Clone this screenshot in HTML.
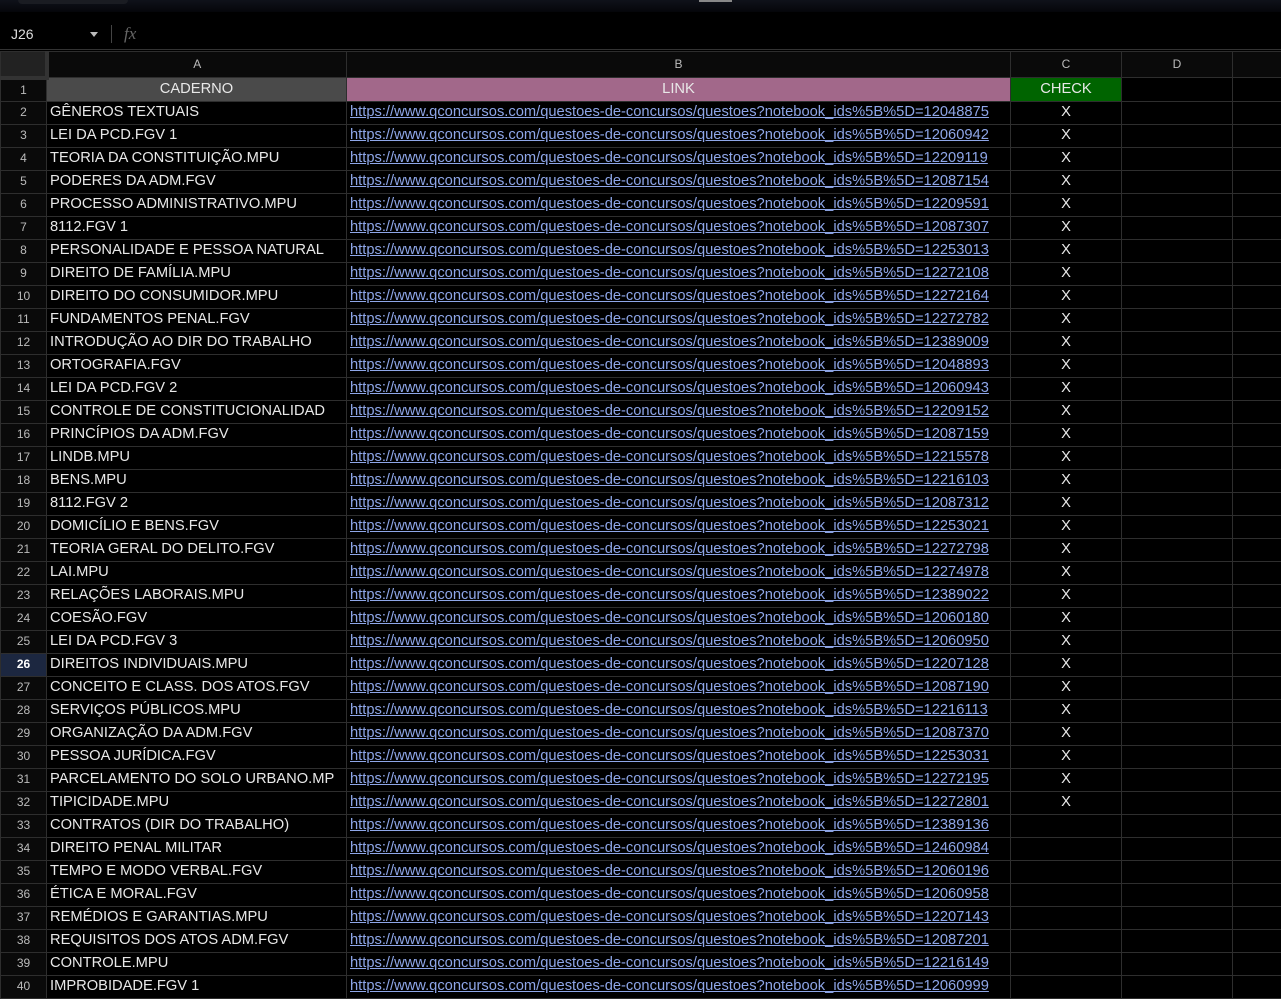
<!DOCTYPE html>
<html><head><meta charset="utf-8"><style>
*{margin:0;padding:0;box-sizing:border-box}
body{width:1281px;height:983px;overflow:hidden;background:#000;font-family:"Liberation Sans",Arial,sans-serif;color:#e8e8e8;position:relative}
.top{position:absolute;left:0;top:0;width:1281px;height:12px;background:linear-gradient(#0f121a,#05060a)}
.tab{position:absolute;left:18px;top:0;width:110px;height:4px;background:#1a1c22;border-radius:0 0 8px 8px}
.tab2{position:absolute;left:699px;top:0;width:33px;height:2px;background:#888}
.fb{position:absolute;left:0;top:18px;width:1281px;height:32px;background:#000;border-bottom:1px solid #333}
.nb{position:absolute;left:11px;top:8px;font-size:14px;color:#ddd}
.arr{position:absolute;left:90px;top:14px;border-left:4px solid transparent;border-right:4px solid transparent;border-top:5px solid #bbb}
.sep{position:absolute;left:111px;top:7px;width:1px;height:18px;background:#444}
.fx{position:absolute;left:124px;top:6px;font-family:"Liberation Serif",serif;font-style:italic;font-size:17px;color:#666}
table{position:absolute;left:0;top:51px;width:1290px;border-collapse:collapse;table-layout:fixed}
td{height:23px;border:1px solid #2e2e2e;font-size:14.7px;white-space:nowrap;overflow:hidden;padding:0 3px;line-height:21px}
tr.h td{height:26px;background:#0a0a0a;color:#bbb;font-size:12px;text-align:center}
td.r{background:#0a0a0a;color:#bbb;font-size:12px;text-align:center;padding:0}
tr.h td.corner{background:#222;border-right:4px solid #333;border-bottom:4px solid #333}
td.l{color:#8ea6e8;text-decoration:underline}
td.c{text-align:center}
td.sel{background:#1c2740;color:#fff;font-weight:bold}
</style></head><body>
<div class="top"><div class="tab"></div><div class="tab2"></div></div>
<div class="fb"><span class="nb">J26</span><span class="arr"></span><span class="sep"></span><span class="fx">fx</span></div>
<table>
<colgroup><col style="width:46px"><col style="width:300px"><col style="width:664px"><col style="width:111px"><col style="width:111px"><col style="width:58px"></colgroup>
<tr class="h"><td class="corner"></td><td>A</td><td>B</td><td>C</td><td>D</td><td></td></tr>
<tr><td class="r">1</td><td style="background:#4a4a4a;text-align:center">CADERNO</td><td style="background:#a2688a;text-align:center">LINK</td><td style="background:#006400;text-align:center">CHECK</td><td></td><td></td></tr>
<tr><td class="r">2</td><td>GÊNEROS TEXTUAIS</td><td class="l">https://www.qconcursos.com/questoes-de-concursos/questoes?notebook_ids%5B%5D=12048875</td><td class="c">X</td><td></td><td></td></tr>
<tr><td class="r">3</td><td>LEI DA PCD.FGV 1</td><td class="l">https://www.qconcursos.com/questoes-de-concursos/questoes?notebook_ids%5B%5D=12060942</td><td class="c">X</td><td></td><td></td></tr>
<tr><td class="r">4</td><td>TEORIA DA CONSTITUIÇÃO.MPU</td><td class="l">https://www.qconcursos.com/questoes-de-concursos/questoes?notebook_ids%5B%5D=12209119</td><td class="c">X</td><td></td><td></td></tr>
<tr><td class="r">5</td><td>PODERES DA ADM.FGV</td><td class="l">https://www.qconcursos.com/questoes-de-concursos/questoes?notebook_ids%5B%5D=12087154</td><td class="c">X</td><td></td><td></td></tr>
<tr><td class="r">6</td><td>PROCESSO ADMINISTRATIVO.MPU</td><td class="l">https://www.qconcursos.com/questoes-de-concursos/questoes?notebook_ids%5B%5D=12209591</td><td class="c">X</td><td></td><td></td></tr>
<tr><td class="r">7</td><td>8112.FGV 1</td><td class="l">https://www.qconcursos.com/questoes-de-concursos/questoes?notebook_ids%5B%5D=12087307</td><td class="c">X</td><td></td><td></td></tr>
<tr><td class="r">8</td><td>PERSONALIDADE E PESSOA NATURAL</td><td class="l">https://www.qconcursos.com/questoes-de-concursos/questoes?notebook_ids%5B%5D=12253013</td><td class="c">X</td><td></td><td></td></tr>
<tr><td class="r">9</td><td>DIREITO DE FAMÍLIA.MPU</td><td class="l">https://www.qconcursos.com/questoes-de-concursos/questoes?notebook_ids%5B%5D=12272108</td><td class="c">X</td><td></td><td></td></tr>
<tr><td class="r">10</td><td>DIREITO DO CONSUMIDOR.MPU</td><td class="l">https://www.qconcursos.com/questoes-de-concursos/questoes?notebook_ids%5B%5D=12272164</td><td class="c">X</td><td></td><td></td></tr>
<tr><td class="r">11</td><td>FUNDAMENTOS PENAL.FGV</td><td class="l">https://www.qconcursos.com/questoes-de-concursos/questoes?notebook_ids%5B%5D=12272782</td><td class="c">X</td><td></td><td></td></tr>
<tr><td class="r">12</td><td>INTRODUÇÃO AO DIR DO TRABALHO</td><td class="l">https://www.qconcursos.com/questoes-de-concursos/questoes?notebook_ids%5B%5D=12389009</td><td class="c">X</td><td></td><td></td></tr>
<tr><td class="r">13</td><td>ORTOGRAFIA.FGV</td><td class="l">https://www.qconcursos.com/questoes-de-concursos/questoes?notebook_ids%5B%5D=12048893</td><td class="c">X</td><td></td><td></td></tr>
<tr><td class="r">14</td><td>LEI DA PCD.FGV 2</td><td class="l">https://www.qconcursos.com/questoes-de-concursos/questoes?notebook_ids%5B%5D=12060943</td><td class="c">X</td><td></td><td></td></tr>
<tr><td class="r">15</td><td>CONTROLE DE CONSTITUCIONALIDAD</td><td class="l">https://www.qconcursos.com/questoes-de-concursos/questoes?notebook_ids%5B%5D=12209152</td><td class="c">X</td><td></td><td></td></tr>
<tr><td class="r">16</td><td>PRINCÍPIOS DA ADM.FGV</td><td class="l">https://www.qconcursos.com/questoes-de-concursos/questoes?notebook_ids%5B%5D=12087159</td><td class="c">X</td><td></td><td></td></tr>
<tr><td class="r">17</td><td>LINDB.MPU</td><td class="l">https://www.qconcursos.com/questoes-de-concursos/questoes?notebook_ids%5B%5D=12215578</td><td class="c">X</td><td></td><td></td></tr>
<tr><td class="r">18</td><td>BENS.MPU</td><td class="l">https://www.qconcursos.com/questoes-de-concursos/questoes?notebook_ids%5B%5D=12216103</td><td class="c">X</td><td></td><td></td></tr>
<tr><td class="r">19</td><td>8112.FGV 2</td><td class="l">https://www.qconcursos.com/questoes-de-concursos/questoes?notebook_ids%5B%5D=12087312</td><td class="c">X</td><td></td><td></td></tr>
<tr><td class="r">20</td><td>DOMICÍLIO E BENS.FGV</td><td class="l">https://www.qconcursos.com/questoes-de-concursos/questoes?notebook_ids%5B%5D=12253021</td><td class="c">X</td><td></td><td></td></tr>
<tr><td class="r">21</td><td>TEORIA GERAL DO DELITO.FGV</td><td class="l">https://www.qconcursos.com/questoes-de-concursos/questoes?notebook_ids%5B%5D=12272798</td><td class="c">X</td><td></td><td></td></tr>
<tr><td class="r">22</td><td>LAI.MPU</td><td class="l">https://www.qconcursos.com/questoes-de-concursos/questoes?notebook_ids%5B%5D=12274978</td><td class="c">X</td><td></td><td></td></tr>
<tr><td class="r">23</td><td>RELAÇÕES LABORAIS.MPU</td><td class="l">https://www.qconcursos.com/questoes-de-concursos/questoes?notebook_ids%5B%5D=12389022</td><td class="c">X</td><td></td><td></td></tr>
<tr><td class="r">24</td><td>COESÃO.FGV</td><td class="l">https://www.qconcursos.com/questoes-de-concursos/questoes?notebook_ids%5B%5D=12060180</td><td class="c">X</td><td></td><td></td></tr>
<tr><td class="r">25</td><td>LEI DA PCD.FGV 3</td><td class="l">https://www.qconcursos.com/questoes-de-concursos/questoes?notebook_ids%5B%5D=12060950</td><td class="c">X</td><td></td><td></td></tr>
<tr><td class="r sel">26</td><td>DIREITOS INDIVIDUAIS.MPU</td><td class="l">https://www.qconcursos.com/questoes-de-concursos/questoes?notebook_ids%5B%5D=12207128</td><td class="c">X</td><td></td><td></td></tr>
<tr><td class="r">27</td><td>CONCEITO E CLASS. DOS ATOS.FGV</td><td class="l">https://www.qconcursos.com/questoes-de-concursos/questoes?notebook_ids%5B%5D=12087190</td><td class="c">X</td><td></td><td></td></tr>
<tr><td class="r">28</td><td>SERVIÇOS PÚBLICOS.MPU</td><td class="l">https://www.qconcursos.com/questoes-de-concursos/questoes?notebook_ids%5B%5D=12216113</td><td class="c">X</td><td></td><td></td></tr>
<tr><td class="r">29</td><td>ORGANIZAÇÃO DA ADM.FGV</td><td class="l">https://www.qconcursos.com/questoes-de-concursos/questoes?notebook_ids%5B%5D=12087370</td><td class="c">X</td><td></td><td></td></tr>
<tr><td class="r">30</td><td>PESSOA JURÍDICA.FGV</td><td class="l">https://www.qconcursos.com/questoes-de-concursos/questoes?notebook_ids%5B%5D=12253031</td><td class="c">X</td><td></td><td></td></tr>
<tr><td class="r">31</td><td>PARCELAMENTO DO SOLO URBANO.MP</td><td class="l">https://www.qconcursos.com/questoes-de-concursos/questoes?notebook_ids%5B%5D=12272195</td><td class="c">X</td><td></td><td></td></tr>
<tr><td class="r">32</td><td>TIPICIDADE.MPU</td><td class="l">https://www.qconcursos.com/questoes-de-concursos/questoes?notebook_ids%5B%5D=12272801</td><td class="c">X</td><td></td><td></td></tr>
<tr><td class="r">33</td><td>CONTRATOS (DIR DO TRABALHO)</td><td class="l">https://www.qconcursos.com/questoes-de-concursos/questoes?notebook_ids%5B%5D=12389136</td><td></td><td></td><td></td></tr>
<tr><td class="r">34</td><td>DIREITO PENAL MILITAR</td><td class="l">https://www.qconcursos.com/questoes-de-concursos/questoes?notebook_ids%5B%5D=12460984</td><td></td><td></td><td></td></tr>
<tr><td class="r">35</td><td>TEMPO E MODO VERBAL.FGV</td><td class="l">https://www.qconcursos.com/questoes-de-concursos/questoes?notebook_ids%5B%5D=12060196</td><td></td><td></td><td></td></tr>
<tr><td class="r">36</td><td>ÉTICA E MORAL.FGV</td><td class="l">https://www.qconcursos.com/questoes-de-concursos/questoes?notebook_ids%5B%5D=12060958</td><td></td><td></td><td></td></tr>
<tr><td class="r">37</td><td>REMÉDIOS E GARANTIAS.MPU</td><td class="l">https://www.qconcursos.com/questoes-de-concursos/questoes?notebook_ids%5B%5D=12207143</td><td></td><td></td><td></td></tr>
<tr><td class="r">38</td><td>REQUISITOS DOS ATOS ADM.FGV</td><td class="l">https://www.qconcursos.com/questoes-de-concursos/questoes?notebook_ids%5B%5D=12087201</td><td></td><td></td><td></td></tr>
<tr><td class="r">39</td><td>CONTROLE.MPU</td><td class="l">https://www.qconcursos.com/questoes-de-concursos/questoes?notebook_ids%5B%5D=12216149</td><td></td><td></td><td></td></tr>
<tr><td class="r">40</td><td>IMPROBIDADE.FGV 1</td><td class="l">https://www.qconcursos.com/questoes-de-concursos/questoes?notebook_ids%5B%5D=12060999</td><td></td><td></td><td></td></tr>
</table>
</body></html>
